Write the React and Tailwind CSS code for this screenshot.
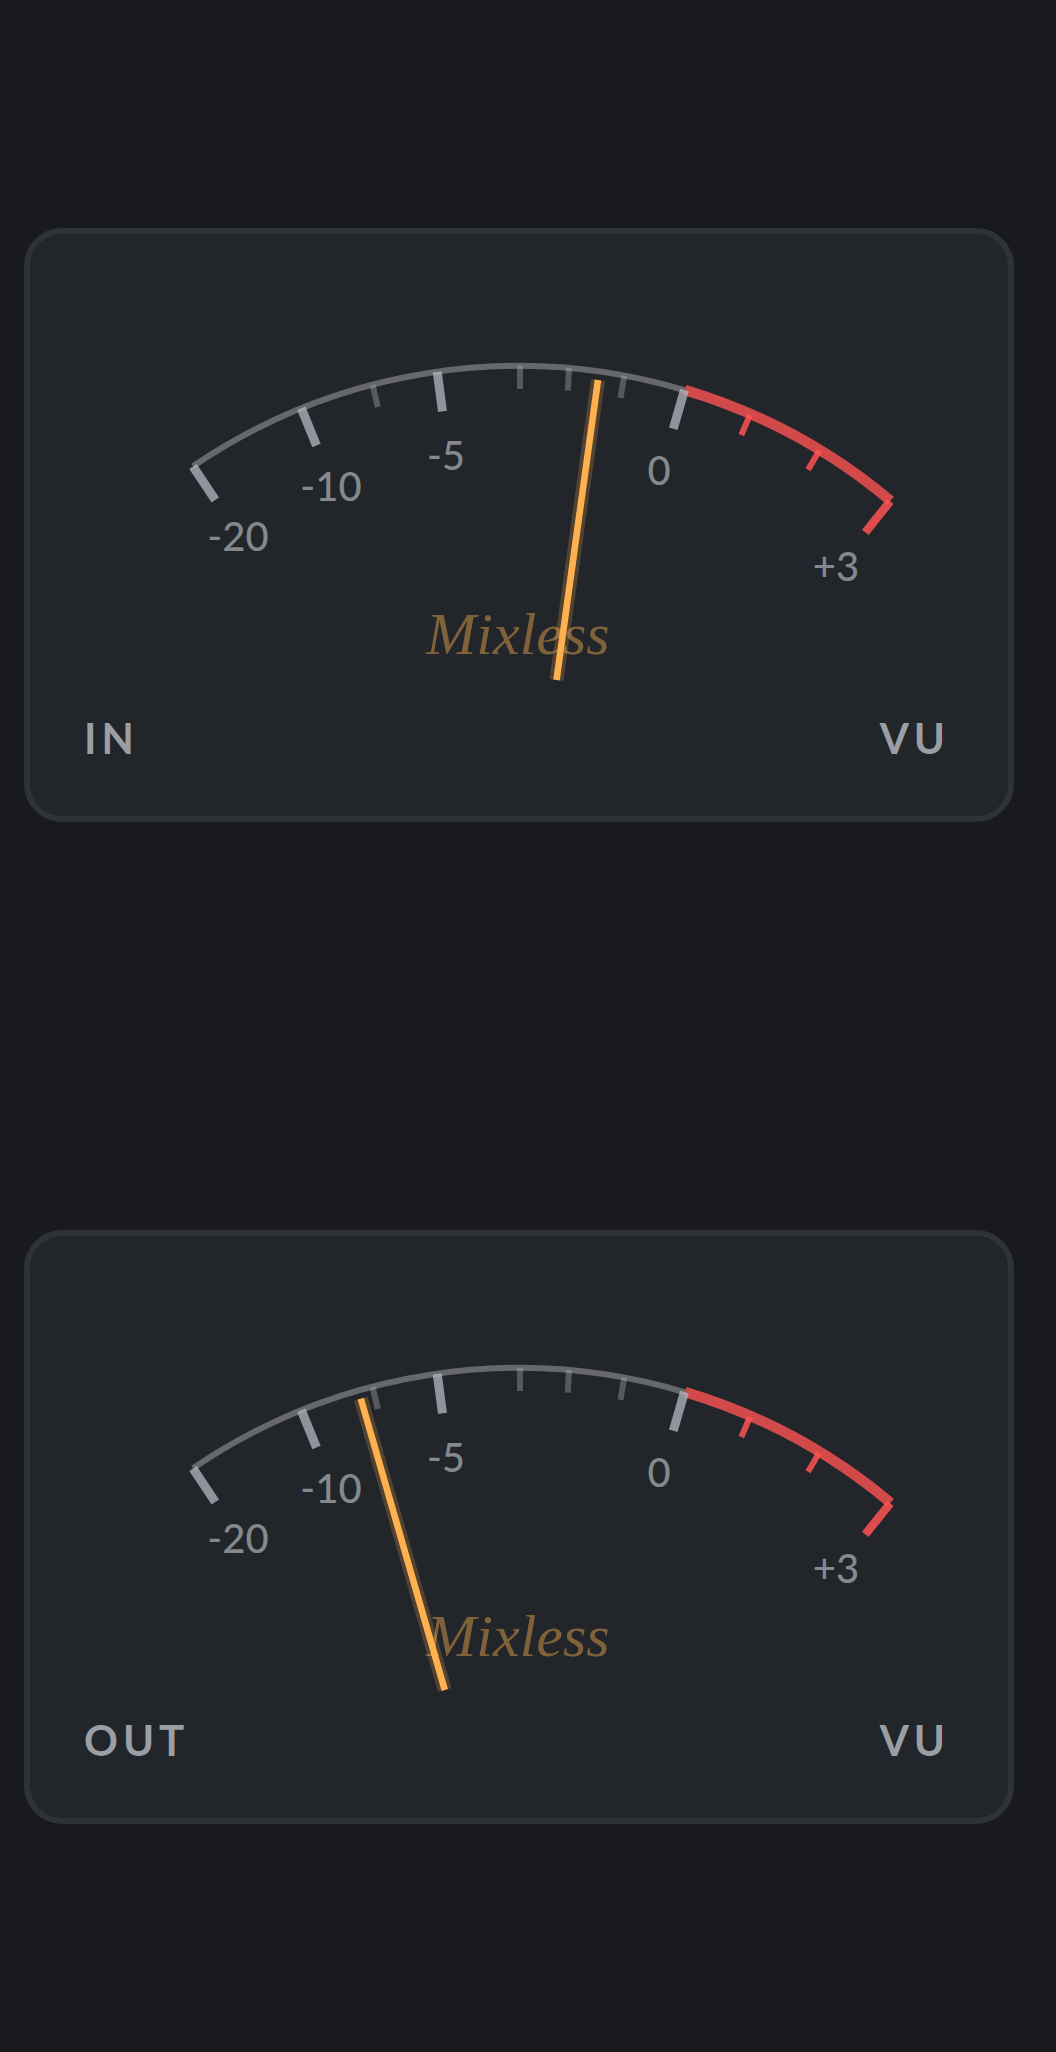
import React from 'react';

const majorTicks = [
  { x1: 163, y1: 232.5, x2: 185.3, y2: 266 },
  { x1: 271.3, y1: 174.3, x2: 286.5, y2: 211.5 },
  { x1: 407.2, y1: 137.8, x2: 412.5, y2: 177.3 },
  { x1: 654.5, y1: 156, x2: 643.3, y2: 194.7 },
];

const minorTicks = [
  { x1: 342.7, y1: 151.2, x2: 347.8, y2: 173 },
  { x1: 490, y1: 131.7, x2: 490, y2: 155 },
  { x1: 539, y1: 134, x2: 537.8, y2: 156.7 },
  { x1: 594.2, y1: 141.7, x2: 590.5, y2: 164 },
];

const hotTicks = [
  { x1: 720, y1: 181, x2: 711.3, y2: 201, width: 6 },
  { x1: 789.2, y1: 216.7, x2: 778, y2: 235.7, width: 6 },
  { x1: 860.2, y1: 267.3, x2: 835.3, y2: 298.3, width: 8.5 },
];

const scaleLabels = [
  { text: '-20', x: 208, y: 317 },
  { text: '-10', x: 301, y: 267 },
  { text: '-5', x: 416, y: 236 },
  { text: '0', x: 629, y: 251 },
  { text: '+3', x: 806, y: 347 },
];

const meters = [
  { name: 'IN', needle: { x1: 526.5, y1: 446, x2: 568, y2: 146 } },
  { name: 'OUT', needle: { x1: 414.8, y1: 454, x2: 330.8, y2: 162.7 } },
];

const Dial = ({ name, needle }) => (
  <svg viewBox="0 0 978 468" className="block w-full" role="img" aria-label={`${name} level`}>
    {/* Scale arc */}
    <path d="M163 232.3 A579 579 0 0 1 655 156.3" fill="none" stroke="#fff" strokeOpacity="0.31" strokeWidth="6" />
    <path d="M655 156 A579 579 0 0 1 860.5 266.7" fill="none" stroke="#ff5252" strokeOpacity="0.8" strokeWidth="10.4" />

    {/* Ticks */}
    {majorTicks.map((tick) => (
      <line key={tick.x1} {...tick} stroke="#b0b5bf" strokeOpacity="0.77" strokeWidth="9" />
    ))}
    {minorTicks.map((tick) => (
      <line key={tick.x1} {...tick} stroke="#b0b5bf" strokeOpacity="0.37" strokeWidth="6" />
    ))}
    {hotTicks.map(({ width, ...tick }) => (
      <line key={tick.x1} {...tick} stroke="#ff5252" strokeOpacity="0.85" strokeWidth={width} />
    ))}

    {scaleLabels.map((label) => (
      <text
        key={label.text}
        x={label.x}
        y={label.y}
        textAnchor="middle"
        className="fill-[#85888c] font-['Lato',sans-serif] text-[40px] font-medium"
      >
        {label.text}
      </text>
    ))}

    <text
      x="488"
      y="420"
      textAnchor="middle"
      className="fill-[#80623a] font-['Liberation_Serif',serif] text-[60px] italic"
    >
      Mixless
    </text>

    {/* Needle */}
    <line {...needle} stroke="#ffb04f" strokeOpacity="0.22" strokeWidth="14" />
    <line {...needle} stroke="#ffb04f" strokeWidth="6.6" />
  </svg>
);

const Meter = ({ name, needle }) => (
  <section className="rounded-[38px] border-[6px] border-[#2f3236] bg-[#222529]">
    <Dial name={name} needle={needle} />
    <div className="flex justify-between pt-3 pr-[58px] pb-[54px] pl-[54px] font-['Lato',sans-serif] text-[42px] leading-[48px] font-bold tracking-[5px] text-[#9b9ea4]">
      <h2>{name}</h2>
      <span>VU</span>
    </div>
  </section>
);

const App = () => {
  return (
    <main className="flex min-h-screen flex-col justify-center gap-[408px] bg-[#191a1d] py-[228px] pr-[42px] pl-6">
      {meters.map((meter) => (
        <Meter key={meter.name} {...meter} />
      ))}
    </main>
  );
};

export default App;
